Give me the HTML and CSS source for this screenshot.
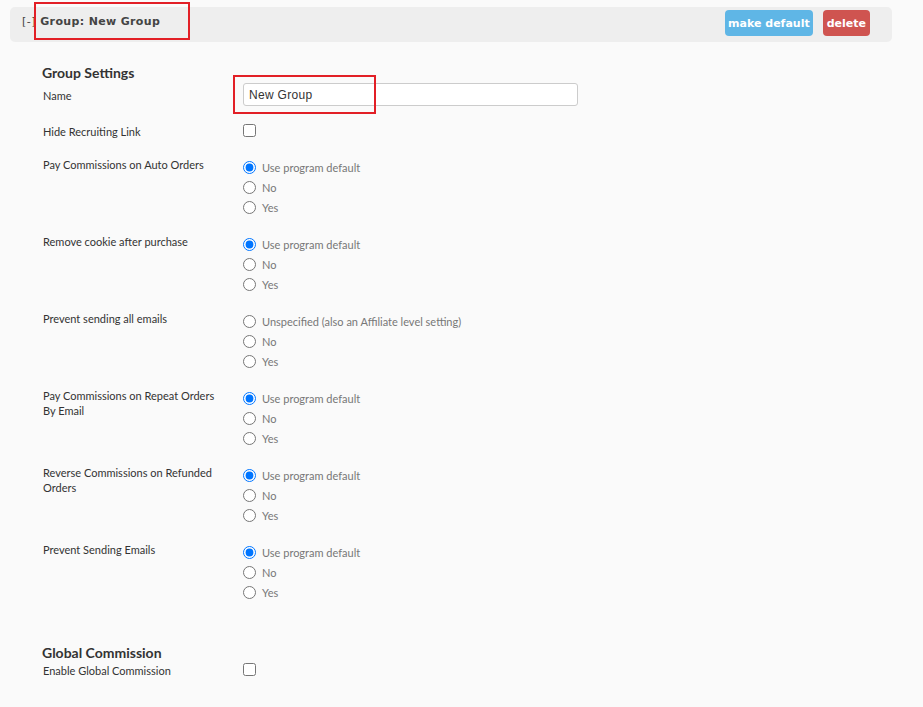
FILE: index.html
```html
<!DOCTYPE html>
<html lang="en">
<head>
    <meta charset="UTF-8">
    <title>Group: New Group</title>
    <link rel="stylesheet" href="styles.css">
</head>
<body>

<div class="group">
    <div class="group-bar">
        <span class="group-title"><span class="toggle">[-]</span> Group: New Group</span>
        <div class="group-actions">
            <button class="btn btn-info">make default</button>
            <button class="btn btn-danger">delete</button>
        </div>
    </div>

    <div class="settings">
        <h3 class="section-title">Group Settings</h3>

        <div class="row row-name">
            <label class="row-label" for="inpName">Name</label>
            <div class="row-control"><input type="text" id="inpName" class="text-input" value="New Group"></div>
        </div>

        <div class="row row-check">
            <label class="row-label">Hide Recruiting Link</label>
            <div class="row-control"><input type="checkbox"></div>
        </div>

        <div class="row row-radio">
            <label class="row-label">Pay Commissions on Auto Orders</label>
            <div class="row-control">
                <label class="opt"><input type="radio" name="autoOrders" checked> Use program default</label>
                <label class="opt"><input type="radio" name="autoOrders"> No</label>
                <label class="opt"><input type="radio" name="autoOrders"> Yes</label>
            </div>
        </div>

        <div class="row row-radio">
            <label class="row-label">Remove cookie after purchase</label>
            <div class="row-control">
                <label class="opt"><input type="radio" name="cookie" checked> Use program default</label>
                <label class="opt"><input type="radio" name="cookie"> No</label>
                <label class="opt"><input type="radio" name="cookie"> Yes</label>
            </div>
        </div>

        <div class="row row-radio">
            <label class="row-label">Prevent sending all emails</label>
            <div class="row-control">
                <label class="opt"><input type="radio" name="allEmails"> Unspecified (also an Affiliate level setting)</label>
                <label class="opt"><input type="radio" name="allEmails"> No</label>
                <label class="opt"><input type="radio" name="allEmails"> Yes</label>
            </div>
        </div>

        <div class="row row-radio">
            <label class="row-label">Pay Commissions on Repeat Orders By Email</label>
            <div class="row-control">
                <label class="opt"><input type="radio" name="repeat" checked> Use program default</label>
                <label class="opt"><input type="radio" name="repeat"> No</label>
                <label class="opt"><input type="radio" name="repeat"> Yes</label>
            </div>
        </div>

        <div class="row row-radio">
            <label class="row-label">Reverse Commissions on Refunded Orders</label>
            <div class="row-control">
                <label class="opt"><input type="radio" name="refunded" checked> Use program default</label>
                <label class="opt"><input type="radio" name="refunded"> No</label>
                <label class="opt"><input type="radio" name="refunded"> Yes</label>
            </div>
        </div>

        <div class="row row-radio">
            <label class="row-label">Prevent Sending Emails</label>
            <div class="row-control">
                <label class="opt"><input type="radio" name="sending" checked> Use program default</label>
                <label class="opt"><input type="radio" name="sending"> No</label>
                <label class="opt"><input type="radio" name="sending"> Yes</label>
            </div>
        </div>

        <h3 class="section-title section-global">Global Commission</h3>

        <div class="row row-check">
            <label class="row-label">Enable Global Commission</label>
            <div class="row-control"><input type="checkbox"></div>
        </div>
    </div>
</div>

<!-- screenshot annotations -->
<div class="mark mark-title"></div>
<div class="mark mark-name"></div>

</body>
</html>
```

FILE: styles.css
```css
html {
    background-color: #fafafa;
}
body {
    margin: 0;
    font-family: Lato, "Open Sans", sans-serif;
    color: #333333;
}
.group {
    padding: 7px 31px 40px 10px;
}
.group-bar {
    display: flex;
    align-items: center;
    justify-content: space-between;
    height: 35px;
    padding: 0 22px 0 12px;
    background-color: #eeeeee;
    border-radius: 5px;
}
.group-title {
    font-family: "DejaVu Sans", Verdana, sans-serif;
    font-size: 11px;
    font-weight: bold;
    letter-spacing: 0.35px;
    color: #444444;
    margin-top: -6px;
}
.toggle {
    font-weight: normal;
    letter-spacing: 0.5px;
}
.group-actions {
    display: flex;
    gap: 10px;
    margin-top: -3px;
}
.btn {
    border: none;
    border-radius: 4px;
    height: 26px;
    padding: 0 3px;
    font-family: "DejaVu Sans", Verdana, sans-serif;
    font-size: 11px;
    font-weight: bold;
    letter-spacing: 0;
    color: white;
}
.btn-info {
    background-color: #5fb6e6;
}
.btn-danger {
    padding: 0 4px;
    background-color: #cf5450;
}
.settings {
    padding-left: 32px;
}
.section-title {
    margin: 22px 0 1px;
    font-size: 14px;
    line-height: 18px;
    font-weight: bold;
    color: #333333;
}
.section-global {
    margin-top: 42px;
}
.row {
    display: grid;
    grid-template-columns: 201px 1fr;
    align-items: start;
    font-size: 11px;
}
.row-label {
    width: 180px;
    padding-left: 1px;
    line-height: 15px;
}
.row-name .row-label {
    line-height: 23px;
    padding-top: 1px;
}
.text-input {
    box-sizing: border-box;
    width: 335px;
    height: 23px;
    margin: 0;
    padding: 0 5px;
    border: 1px solid #cccccc;
    border-radius: 3px;
    background-color: white;
    font-family: "Liberation Sans", Arial, sans-serif;
    font-size: 12px;
    letter-spacing: 0.3px;
    color: #333333;
}
.row-check {
    margin-top: 17px;
}
.row-check input {
    width: 13px;
    height: 13px;
    margin: 0;
}
.row-radio {
    margin-top: 17px;
}
.row-check + .row-radio {
    margin-top: 18px;
}
.opt {
    display: flex;
    align-items: center;
    height: 20px;
    color: #777777;
}
.opt input {
    width: 13px;
    height: 13px;
    margin: 0 6px 0 0;
}
.section-global + .row-check {
    margin-top: 0;
}
.mark {
    position: absolute;
    box-sizing: border-box;
    border: 2px solid #e21f26;
}
.mark-title {
    left: 34px;
    top: 2px;
    width: 156px;
    height: 38px;
}
.mark-name {
    left: 233px;
    top: 75px;
    width: 143px;
    height: 39px;
}
```
